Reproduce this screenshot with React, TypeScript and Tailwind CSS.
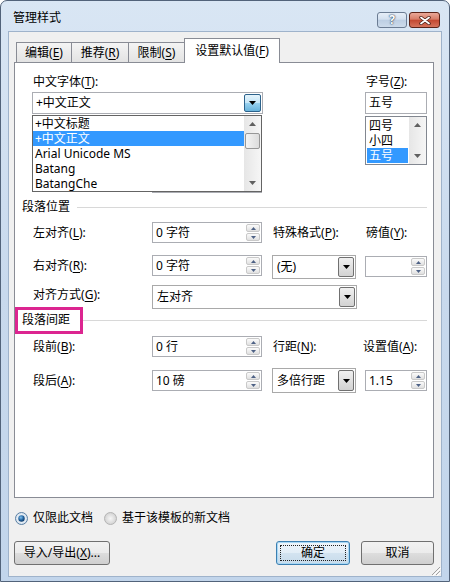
import type { ReactNode } from "react"

// label with an underlined access key, e.g. 编辑(E)
function K({ t, k, c = true }: { t: string; k: string; c?: boolean }) {
  return (
    <span className="whitespace-nowrap">
      {t}(<span className="underline underline-offset-2">{k}</span>){c ? ":" : ""}
    </span>
  )
}

function Tri({ up, color = "#000" }: { up?: boolean; color?: string }) {
  return (
    <svg width="7" height="4" viewBox="0 0 7 4">
      <path d={up ? "M0 4h7L3.5 0z" : "M0 0h7L3.5 4z"} fill={color} />
    </svg>
  )
}

function SpinBtn({ up }: { up?: boolean }) {
  return (
    <div className="flex flex-1 items-center justify-center rounded-[2px] border border-[#c9c9c9] bg-gradient-to-b from-[#fbfbfb] to-[#e0e0e0]">
      <svg width="5" height="3" viewBox="0 0 5 3">
        <path d={up ? "M0 3h5L2.5 0z" : "M0 0h5L2.5 3z"} fill="#4d6185" />
      </svg>
    </div>
  )
}

function Spin({ v, w }: { v?: string; w: string }) {
  return (
    <div className={`flex h-[21px] border border-[#abadb3] bg-white ${w}`}>
      <span className="flex flex-1 items-center pl-[3px]">{v}</span>
      <div className="my-px mr-px flex w-[14px] flex-col gap-px">
        <SpinBtn up />
        <SpinBtn />
      </div>
    </div>
  )
}

function Combo({ v, w, h = "h-[24px]" }: { v: string; w: string; h?: string }) {
  return (
    <div className={`flex border border-[#a9a9a9] bg-white p-px ${w} ${h}`}>
      <span className="flex flex-1 items-center pl-[3px]">{v}</span>
      <div className="flex w-[16px] items-center justify-center rounded-[2px] border border-[#707070] bg-gradient-to-b from-[#f0f0f0] to-[#d2d2d2]">
        <Tri />
      </div>
    </div>
  )
}

function ScrollBtn({ up }: { up?: boolean }) {
  return (
    <div className="flex h-[16px] items-center justify-center">
      <Tri up={up} color="#606060" />
    </div>
  )
}

function Header({ title, lineGap, children }: { title: string; lineGap: string; children?: ReactNode }) {
  return (
    <div className="relative flex h-[16px] items-center pl-[7px] pr-[6px]">
      {children}
      <span className="relative">{title}</span>
      <div className={`h-px flex-1 bg-[#d8d8d8] ${lineGap}`} />
    </div>
  )
}

function Radio({ on }: { on?: boolean }) {
  return (
    <svg width="13" height="13" viewBox="0 0 13 13">
      <defs>
        <radialGradient id={on ? "rg1" : "rg0"} cx="50%" cy="50%" r="50%">
          <stop offset="0%" stopColor={on ? "#ffffff" : "#f6f6f6"} />
          <stop offset="100%" stopColor={on ? "#d6e2ee" : "#d2d2d2"} />
        </radialGradient>
        <radialGradient id="dot" cx="40%" cy="35%" r="70%">
          <stop offset="0%" stopColor="#7ec0f0" />
          <stop offset="60%" stopColor="#1f5f9a" />
          <stop offset="100%" stopColor="#0d3560" />
        </radialGradient>
      </defs>
      <circle cx="6.5" cy="6.5" r="6" fill={`url(#${on ? "rg1" : "rg0"})`} stroke={on ? "#5a7fa3" : "#b4b4b4"} />
      {on && <circle cx="6.5" cy="6.5" r="3.2" fill="url(#dot)" />}
    </svg>
  )
}

function Btn({ children, w, def }: { children: ReactNode; w: string; def?: boolean }) {
  return (
    <div
      className={`relative flex h-[24px] items-center justify-center rounded-[3px] border ${
        def
          ? "border-[#3c7fb1] bg-[linear-gradient(#eef5fb_0%,#e2edf6_50%,#d3e3f0_51%,#c7dbeb_100%)] shadow-[inset_0_0_0_1px_#a8d8f5]"
          : "border-[#707070] bg-[linear-gradient(#f2f2f2_0%,#ebebeb_50%,#dddddd_51%,#cfcfcf_100%)]"
      } ${w}`}
    >
      {def && <div className="absolute inset-[3px] border border-dotted border-[#222]" />}
      <span className="relative">{children}</span>
    </div>
  )
}

export default function App() {
  const fonts = ["+中文标题", "+中文正文", "Arial Unicode MS", "Batang", "BatangChe"]
  const sizes = ["四号", "小四", "五号"]

  return (
    <div className="h-[582px] w-[450px] bg-white font-['Noto_Sans','Noto_Sans_CJK_SC',sans-serif] text-[12px] leading-[16px] text-black">
      <div className="flex h-full flex-col rounded-t-[7px] border border-[#52637a] bg-gradient-to-b from-[#d9e6f4] via-[#c8d9ed] to-[#c2d5eb] px-[7px] pb-[4px]">
        {/* title bar */}
        <div className="flex h-[30px] items-start">
          <span className="ml-[5px] mt-[9px]">管理样式</span>
          <div className="ml-auto mr-[2px] mt-[11px] flex gap-[2px]">
            <div className="flex h-[16px] w-[30px] items-center justify-center rounded-[3px] border border-[#6b7c93] bg-[linear-gradient(#e6eef8_0%,#d3e0ef_45%,#bccee3_50%,#cddbeb_100%)]">
              <span className="text-[12px] font-bold leading-none text-white [text-shadow:0_0_1px_#1f3550,0_0_2px_#1f3550]">?</span>
            </div>
            <div className="flex h-[16px] w-[31px] items-center justify-center rounded-[3px] border border-[#5b2318] bg-[linear-gradient(#eaa898_0%,#d67c67_45%,#c3472f_50%,#d6735c_100%)]">
              <svg width="12" height="9" viewBox="0 0 12 9">
                <path d="M2 1.5l8 6M10 1.5l-8 6" stroke="#4a1d14" strokeWidth="3.4" strokeLinecap="round" />
                <path d="M2 1.5l8 6M10 1.5l-8 6" stroke="#fff" strokeWidth="1.8" strokeLinecap="round" />
              </svg>
            </div>
          </div>
        </div>

        {/* client area */}
        <div className="relative flex flex-1 flex-col border border-[#9fb3cb] bg-[#f0f0f0] pl-[5px] pr-[7px] pt-[6px]">
          {/* tabs */}
          <div className="relative z-10 -mb-px flex h-[25px] items-end pl-[2px]">
            <div className="mb-px flex h-[20px] w-[56px] items-center justify-center border border-b-0 border-[#898c95] bg-gradient-to-b from-[#f4f4f4] to-[#e3e3e3]">
              <K t="编辑" k="E" c={false} />
            </div>
            <div className="-ml-px mb-px flex h-[20px] w-[58px] items-center justify-center border border-b-0 border-[#898c95] bg-gradient-to-b from-[#f4f4f4] to-[#e3e3e3]">
              <K t="推荐" k="R" c={false} />
            </div>
            <div className="-ml-px mb-px flex h-[20px] w-[57px] items-center justify-center border border-b-0 border-[#898c95] bg-gradient-to-b from-[#f4f4f4] to-[#e3e3e3]">
              <K t="限制" k="S" c={false} />
            </div>
            <div className="-ml-px flex h-[25px] w-[96px] items-center justify-center border border-b-0 border-[#898c95] bg-white">
              <K t="设置默认值" k="F" c={false} />
            </div>
          </div>

          {/* panel */}
          <div className="relative h-[436px] border border-[#898c95] bg-white">
            <div className="flex h-[136px] pl-[17px] pt-[11px]">
              <div className="flex w-[231px] flex-col">
                <div className="pl-px">
                  <K t="中文字体" k="T" />
                </div>
                <div className="mt-[2px] flex h-[22px] border border-[#abadb3] bg-white">
                  <span className="flex flex-1 items-center pl-[3px]">+中文正文</span>
                  <div className="m-px flex w-[17px] items-center justify-center rounded-[2px] border border-[#2c628b] bg-[linear-gradient(#e5f4fc_0%,#c4e5f6_50%,#98d1ef_51%,#68b3db_100%)]">
                    <Tri />
                  </div>
                </div>
                {/* control hidden under the open list */}
                <div className="ml-[120px] mt-[57px] flex h-[22px] w-[110px] border border-[#abadb3] bg-white p-px">
                  <div className="ml-auto w-[16px] border border-[#707070] bg-[#dcdcdc]" />
                </div>
              </div>

              <div className="ml-[102px] flex w-[62px] flex-col">
                <div className="pl-px">
                  <K t="字号" k="Z" />
                </div>
                <div className="mt-[2px] flex h-[22px] items-center border border-[#abadb3] bg-white pl-[3px]">五号</div>
                <div className="mt-[2px] flex h-[49px] border border-[#828790] bg-white">
                  <div className="flex flex-1 flex-col p-px">
                    {sizes.map((s) => (
                      <div
                        key={s}
                        className={`h-[15px] pl-[2px] leading-[15px] ${s === "五号" ? "bg-[#3399ff] text-white" : ""}`}
                      >
                        {s}
                      </div>
                    ))}
                  </div>
                  <div className="flex w-[17px] flex-col justify-between bg-gradient-to-r from-[#e6e6e6] to-[#f6f6f6]">
                    <ScrollBtn up />
                    <ScrollBtn />
                  </div>
                </div>
              </div>
            </div>

            {/* open font list */}
            <div className="absolute left-[17px] top-[52px] z-20 flex h-[77px] w-[230px] border border-[#646464] bg-white">
              <div className="flex flex-1 flex-col">
                {fonts.map((f) => (
                  <div
                    key={f}
                    className={`h-[15px] whitespace-nowrap pl-[2px] leading-[15px] ${
                      f === "+中文正文" ? "bg-[#3399ff] text-white" : ""
                    }`}
                  >
                    {f}
                  </div>
                ))}
              </div>
              <div className="flex w-[17px] flex-col bg-gradient-to-r from-[#e6e6e6] to-[#f6f6f6]">
                <ScrollBtn up />
                <div className="mx-px mt-px h-[16px] rounded-[2px] border border-[#979797] bg-gradient-to-r from-[#f4f4f4] to-[#dcdcdc]" />
                <div className="flex-1" />
                <ScrollBtn />
              </div>
            </div>

            <Header title="段落位置" lineGap="ml-[7px]" />

            <div className="mt-[7px] flex h-[21px] items-center pl-[18px]">
              <div className="w-[119px]">
                <K t="左对齐" k="L" />
              </div>
              <Spin v="0 字符" w="w-[110px]" />
              <div className="ml-[10px] w-[84px] pl-px">
                <K t="特殊格式" k="P" />
              </div>
              <div className="ml-[9px] w-[62px] pl-px">
                <K t="磅值" k="Y" />
              </div>
            </div>

            <div className="mt-[12px] flex h-[24px] items-start pl-[18px]">
              <div className="flex h-[21px] w-[119px] items-center">
                <K t="右对齐" k="R" />
              </div>
              <Spin v="0 字符" w="w-[110px]" />
              <Combo v="(无)" w="ml-[10px] w-[84px]" />
              <div className="ml-[9px] mt-px">
                <Spin w="w-[62px]" />
              </div>
            </div>

            <div className="mt-[6px] flex h-[24px] items-start pl-[18px]">
              <div className="flex h-[20px] w-[119px] items-center">
                <K t="对齐方式" k="G" />
              </div>
              <Combo v="左对齐" w="w-[205px]" />
            </div>

            <div className="mt-[3px]">
              <Header title="段落间距" lineGap="ml-[13px]">
                <div className="absolute left-0 top-[-5px] h-[27px] w-[68px] border-[3px] border-[#dc2590]" />
              </Header>
            </div>

            <div className="mt-[8px] flex h-[21px] items-center pl-[18px]">
              <div className="w-[119px]">
                <K t="段前" k="B" />
              </div>
              <Spin v="0 行" w="w-[110px]" />
              <div className="ml-[10px] w-[84px] pl-px">
                <K t="行距" k="N" />
              </div>
              <div className="ml-[7px] w-[64px]">
                <K t="设置值" k="A" />
              </div>
            </div>

            <div className="mt-[11px] flex h-[25px] items-center pl-[18px]">
              <div className="w-[119px]">
                <K t="段后" k="A" />
              </div>
              <Spin v="10 磅" w="w-[110px]" />
              <Combo v="多倍行距" w="ml-[10px] w-[84px]" h="h-[25px]" />
              <div className="ml-[9px]">
                <Spin v="1.15" w="w-[62px]" />
              </div>
            </div>
          </div>

          {/* radios */}
          <div className="mt-[12px] flex h-[16px] items-center pl-px">
            <Radio on />
            <span className="ml-[5px]">仅限此文档</span>
            <span className="ml-[11px] flex items-center">
              <Radio />
            </span>
            <span className="ml-[5px]">基于该模板的新文档</span>
          </div>

          {/* buttons */}
          <div className="mt-[15px] flex">
            <Btn w="w-[96px]">
              导入/导出(<span className="underline underline-offset-2">X</span>)...
            </Btn>
            <div className="ml-auto flex gap-[11px]">
              <Btn w="w-[74px]" def>
                确定
              </Btn>
              <Btn w="w-[73px]">取消</Btn>
            </div>
          </div>

          {/* size grip */}
          <svg className="absolute bottom-0 right-0" width="12" height="12" viewBox="0 0 12 12">
            <path d="M11 3L3 11M11 7L7 11" stroke="#a0a0a0" strokeWidth="1" />
            <path d="M12 4L4 12M12 8L8 12" stroke="#ffffff" strokeWidth="1" />
          </svg>
        </div>
      </div>
    </div>
  )
}
